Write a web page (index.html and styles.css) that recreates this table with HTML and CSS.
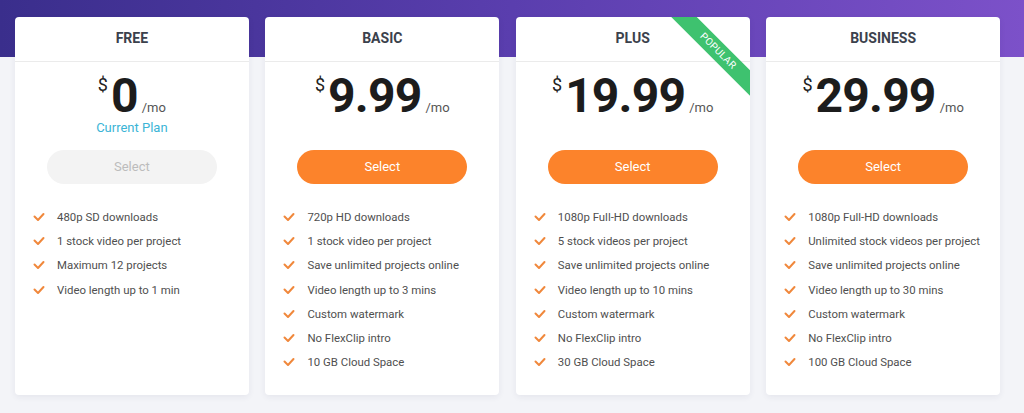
FILE: index.html
```html
<!DOCTYPE html>
<html lang="en">
<head>
<meta charset="utf-8">
<title>Pricing</title>
<link rel="stylesheet" href="styles.css">
</head>
<body>
<svg width="0" height="0" class="defs">
  <defs>
    <symbol id="chk" viewBox="0 0 12 10">
      <polyline points="1.5,4.5 5,8 10.5,2" fill="none" stroke="#f0883c" stroke-width="2" stroke-linecap="round" stroke-linejoin="round"/>
    </symbol>
  </defs>
</svg>
<main class="plans">
  <section class="card">
    <header class="card-head">FREE</header>
    <div class="price"><span class="cur">$</span><span class="amt">0</span><span class="per">/mo</span></div>
    <div class="note">Current Plan</div>
    <button class="btn btn-off">Select</button>
    <ul class="feats">
      <li><svg class="ic"><use href="#chk"/></svg>480p SD downloads</li>
      <li><svg class="ic"><use href="#chk"/></svg>1 stock video per project</li>
      <li><svg class="ic"><use href="#chk"/></svg>Maximum 12 projects</li>
      <li><svg class="ic"><use href="#chk"/></svg>Video length up to 1 min</li>
    </ul>
  </section>
  <section class="card">
    <header class="card-head">BASIC</header>
    <div class="price"><span class="cur">$</span><span class="amt">9.99</span><span class="per">/mo</span></div>
    <div class="note"></div>
    <button class="btn">Select</button>
    <ul class="feats">
      <li><svg class="ic"><use href="#chk"/></svg>720p HD downloads</li>
      <li><svg class="ic"><use href="#chk"/></svg>1 stock video per project</li>
      <li><svg class="ic"><use href="#chk"/></svg>Save unlimited projects online</li>
      <li><svg class="ic"><use href="#chk"/></svg>Video length up to 3 mins</li>
      <li><svg class="ic"><use href="#chk"/></svg>Custom watermark</li>
      <li><svg class="ic"><use href="#chk"/></svg>No FlexClip intro</li>
      <li><svg class="ic"><use href="#chk"/></svg>10 GB Cloud Space</li>
    </ul>
  </section>
  <section class="card">
    <div class="ribbon">POPULAR</div>
    <header class="card-head">PLUS</header>
    <div class="price"><span class="cur">$</span><span class="amt">19.99</span><span class="per">/mo</span></div>
    <div class="note"></div>
    <button class="btn">Select</button>
    <ul class="feats">
      <li><svg class="ic"><use href="#chk"/></svg>1080p Full-HD downloads</li>
      <li><svg class="ic"><use href="#chk"/></svg>5 stock videos per project</li>
      <li><svg class="ic"><use href="#chk"/></svg>Save unlimited projects online</li>
      <li><svg class="ic"><use href="#chk"/></svg>Video length up to 10 mins</li>
      <li><svg class="ic"><use href="#chk"/></svg>Custom watermark</li>
      <li><svg class="ic"><use href="#chk"/></svg>No FlexClip intro</li>
      <li><svg class="ic"><use href="#chk"/></svg>30 GB Cloud Space</li>
    </ul>
  </section>
  <section class="card">
    <header class="card-head">BUSINESS</header>
    <div class="price"><span class="cur">$</span><span class="amt">29.99</span><span class="per">/mo</span></div>
    <div class="note"></div>
    <button class="btn">Select</button>
    <ul class="feats">
      <li><svg class="ic"><use href="#chk"/></svg>1080p Full-HD downloads</li>
      <li><svg class="ic"><use href="#chk"/></svg>Unlimited stock videos per project</li>
      <li><svg class="ic"><use href="#chk"/></svg>Save unlimited projects online</li>
      <li><svg class="ic"><use href="#chk"/></svg>Video length up to 30 mins</li>
      <li><svg class="ic"><use href="#chk"/></svg>Custom watermark</li>
      <li><svg class="ic"><use href="#chk"/></svg>No FlexClip intro</li>
      <li><svg class="ic"><use href="#chk"/></svg>100 GB Cloud Space</li>
    </ul>
  </section>
</main>
</body>
</html>
```

FILE: styles.css
```css
* { box-sizing: border-box; }
html, body { margin: 0; padding: 0; }
body {
  font-family: Roboto, "Liberation Sans", Arial, sans-serif;
  background:
    linear-gradient(90deg, #3a2e8c 0%, #5a3eae 50%, #7c51c9 100%) top left / 100% 57px no-repeat,
    #f3f4f8;
  height: 413px;
  overflow: hidden;
}
.defs { position: absolute; }
.plans {
  display: grid;
  grid-template-columns: repeat(4, 1fr);
  column-gap: 16.67px;
  padding: 17px 24px 0 15px;
}
.card {
  position: relative;
  overflow: hidden;
  background: #fff;
  border-radius: 4px;
  box-shadow: 0 2px 6px rgba(40, 40, 80, 0.07);
  height: 378px;
  display: flex;
  flex-direction: column;
  align-items: center;
}
.card-head {
  align-self: stretch;
  height: 45px;
  border-bottom: 1px solid #ebebeb;
  text-align: center;
  font-size: 14px;
  font-weight: 700;
  line-height: 43px;
  color: #3b414c;
}
.price {
  display: flex;
  justify-content: center;
  align-items: baseline;
  height: 40px;
  margin-top: 14px;
  color: #1c1c1c;
}
.cur {
  align-self: flex-start;
  font-size: 18px;
  line-height: 18px;
  margin-top: 0;
  margin-right: 3px;
  color: #222;
}
.amt {
  font-size: 48px;
  font-weight: 700;
  line-height: 40px;
  letter-spacing: -0.8px;
}
.per {
  font-size: 13px;
  color: #555;
  margin-left: 4px;
}
.note {
  height: 16px;
  margin-top: 4px;
  font-size: 13px;
  line-height: 16px;
  color: #3bb4d6;
}
.btn {
  margin-top: 14px;
  width: 170px;
  height: 34px;
  border: 0;
  border-radius: 17px;
  background: #fc832b;
  color: #fff;
  font-family: inherit;
  font-size: 13px;
  padding: 0 0 1px;
}
.btn-off {
  background: #f3f3f3;
  color: #bcbcbc;
}
.feats {
  list-style: none;
  margin: 21px 0 0;
  padding: 0 0 0 18px;
  align-self: stretch;
}
.feats li {
  display: flex;
  align-items: center;
  height: 24.2px;
  font-size: 11.4px;
  color: #4f4f4f;
}
.ic {
  width: 12px;
  height: 10px;
  margin-right: 12px;
  flex: none;
}
.ribbon {
  position: absolute;
  left: 142px;
  top: 25px;
  width: 120px;
  height: 18px;
  background: #3ec26f;
  color: #fff;
  font-size: 10px;
  line-height: 18px;
  text-align: center;
  letter-spacing: 0.3px;
  transform: rotate(45deg);
}
```
